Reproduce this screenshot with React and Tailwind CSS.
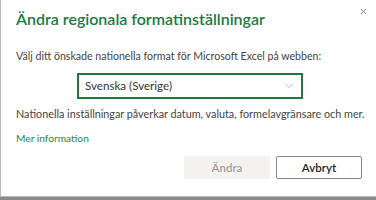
import React from 'react';
import { ChevronDown, X } from 'lucide-react';

export default function App() {
  return (
    <div className="w-[376px] h-[200px] bg-[#8a8a8a] overflow-hidden" style={{ fontFamily: 'Lato, "Noto Sans", sans-serif' }}>
      <div className="relative h-[197px] bg-white border-l border-b border-[#b8b8b8] pl-[15px] pr-[14px]">
        <button className="absolute right-[8px] top-[7px] text-[#666]">
          <X className="w-[9px] h-[9px]" strokeWidth={2} />
        </button>
        <h1 className="pt-[7px] text-[16px] leading-[24px] font-semibold text-[#1a7a44] whitespace-nowrap">
          Ändra regionala formatinställningar
        </h1>
        <p className="mt-[17px] text-[10.6px] leading-[16px] text-[#444] whitespace-nowrap">
          Välj ditt önskade nationella format för Microsoft Excel på webben:
        </p>
        <div className="mt-[9px] ml-[61px] w-[226px] h-[26px] border-2 border-[#1e7a45] flex items-center justify-between pl-[6px] pr-[6px]">
          <span className="text-[11.6px] text-[#333]">Svenska (Sverige)</span>
          <ChevronDown className="w-[12px] h-[12px] text-[#999]" strokeWidth={1.5} />
        </div>
        <p className="mt-[7px] text-[10.8px] leading-[16px] text-[#444] whitespace-nowrap">
          Nationella inställningar påverkar datum, valuta, formelavgränsare och mer.
        </p>
        <a className="block mt-[8px] text-[10.2px] leading-[16px] text-[#1e8a4c]">Mer information</a>
        <div className="mt-[10px] flex justify-end gap-[6px]">
          <button className="w-[86px] h-[23px] bg-[#f3f2f1] text-[#a19f9d] text-[11.5px] font-semibold rounded-[2px]">Ändra</button>
          <button className="w-[86px] h-[23px] bg-white border border-[#8a8886] text-[#222] text-[11.5px] font-semibold rounded-[2px]">Avbryt</button>
        </div>
      </div>
    </div>
  );
}
